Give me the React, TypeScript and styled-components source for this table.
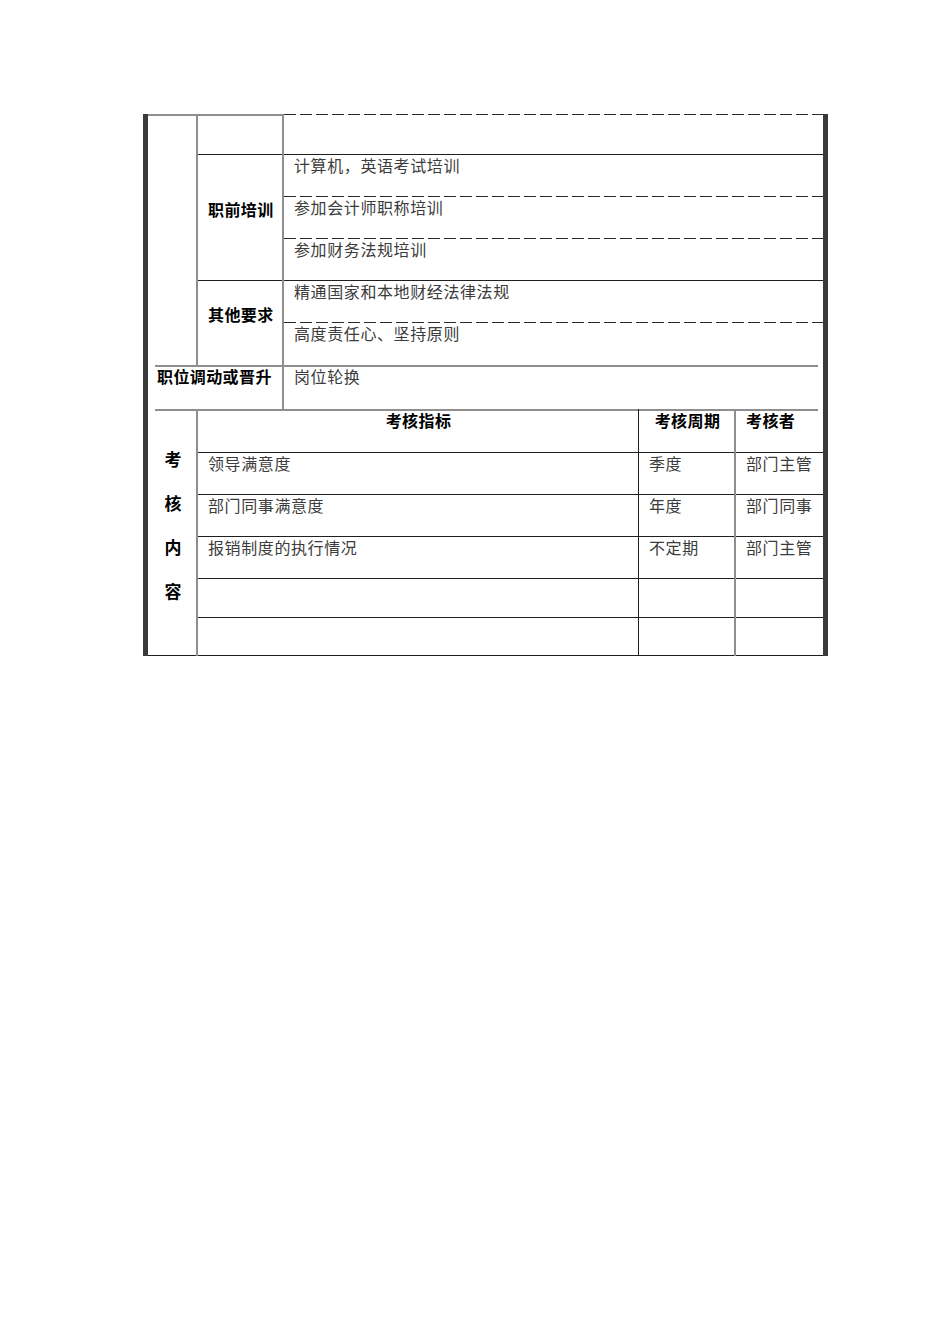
import React from "react";
import styled, { createGlobalStyle } from "styled-components";

type Line = "dark" | "grey" | "dash" | "none";
type Side = "dark" | "grey" | "none";

const DARK = "#1f1f1f";
const GREY = "#8e8e8e";

const GlobalStyle = createGlobalStyle`
    body {
        margin: 0;
        background: #fff;
    }
`;

const Page = styled.div`
    padding: 114px 0 0 143px;
    font-family: "Noto Sans CJK SC", "Noto Sans", sans-serif;
`;

const Frame = styled.div`
    width: 675px;
    border-left: 5px solid #3a3a3a;
    border-right: 5px solid #3a3a3a;
`;

const Sheet = styled.table`
    width: 675px;
    table-layout: fixed;
    border-collapse: separate;
    border-spacing: 0;
    box-shadow: inset 0 -1px 0 ${DARK};
`;

const Row = styled.tr<{ $h: number }>`
    height: ${(p) => p.$h}px;
`;

// top line drawn as a background so it does not change the row heights
const topLine = (kind: Line, gapStart: number, gapEnd: number) => {
    const pos = `${gapStart}px 0`;
    const w = `calc(100% - ${gapStart + gapEnd}px)`;
    switch (kind) {
        case "dark":
            return `linear-gradient(${DARK}, ${DARK}) ${pos} / ${w} 1px no-repeat`;
        case "grey":
            return `linear-gradient(${GREY}, ${GREY}) ${pos} / ${w} 2px no-repeat`;
        case "dash":
            return `repeating-linear-gradient(to right, #2b2b2b 0 12px, transparent 12px 16px) ${pos} / ${w} 1px no-repeat`;
        default:
            return "none";
    }
};

const rightLine = (kind: Side) => {
    switch (kind) {
        case "dark":
            return `inset -1px 0 0 ${DARK}`;
        case "grey":
            return `inset -2px 0 0 ${GREY}`;
        default:
            return "none";
    }
};

const Cell = styled.td<{
    $top?: Line;
    $right?: Side;
    $bold?: boolean;
    $center?: boolean;
    $middle?: boolean;
    $gapStart?: number;
    $gapEnd?: number;
    $lift?: number;
}>`
    padding: 1px 0 ${(p) => p.$lift ?? 0}px ${(p) => (p.$center ? 0 : 10)}px;
    vertical-align: ${(p) => (p.$middle ? "middle" : "top")};
    text-align: ${(p) => (p.$center ? "center" : "left")};
    font-size: 16px;
    line-height: 20px;
    letter-spacing: ${(p) => (p.$bold ? 0.4 : 0.6)}px;
    font-weight: ${(p) => (p.$bold ? 700 : 400)};
    color: ${(p) => (p.$bold ? "#000" : "#3c3c3c")};
    white-space: nowrap;
    background: ${(p) => topLine(p.$top ?? "none", p.$gapStart ?? 0, p.$gapEnd ?? 0)};
    box-shadow: ${(p) => rightLine(p.$right ?? "none")};
`;

const StackLabel = styled.div`
    display: flex;
    flex-direction: column;
    align-items: center;
    font-size: 17px;
    line-height: 44px;
    font-weight: 700;
    color: #000;
    letter-spacing: 0;
`;

const pretraining = ["计算机，英语考试培训", "参加会计师职称培训", "参加财务法规培训"];
const others = ["精通国家和本地财经法律法规", "高度责任心、坚持原则"];
const reviews = [
    { item: "领导满意度", cycle: "季度", by: "部门主管", h: 42 },
    { item: "部门同事满意度", cycle: "年度", by: "部门同事", h: 42 },
    { item: "报销制度的执行情况", cycle: "不定期", by: "部门主管", h: 42 },
    { item: "", cycle: "", by: "", h: 39 },
    { item: "", cycle: "", by: "", h: 39 },
];

export default function App() {
    return (
        <>
            <GlobalStyle />
            <Page>
                <Frame>
                    <Sheet>
                        <colgroup>
                            <col style={{ width: 50 }} />
                            <col style={{ width: 86 }} />
                            <col style={{ width: 355 }} />
                            <col style={{ width: 97 }} />
                            <col style={{ width: 87 }} />
                        </colgroup>
                        <tbody>
                            <Row $h={40}>
                                <Cell rowSpan={6} $top="grey" $right="grey" />
                                <Cell $top="grey" $right="grey" />
                                <Cell colSpan={3} $top="dash" />
                            </Row>
                            {pretraining.map((text, idx) => (
                                <Row key={text} $h={42}>
                                    {idx === 0 && (
                                        <Cell rowSpan={3} $top="dark" $right="grey" $bold $middle $lift={18}>
                                            职前培训
                                        </Cell>
                                    )}
                                    <Cell colSpan={3} $top={idx === 0 ? "dark" : "dash"}>
                                        {text}
                                    </Cell>
                                </Row>
                            ))}
                            {others.map((text, idx) => (
                                <Row key={text} $h={idx === 0 ? 42 : 43}>
                                    {idx === 0 && (
                                        <Cell rowSpan={2} $top="dark" $right="grey" $bold $middle $lift={18}>
                                            其他要求
                                        </Cell>
                                    )}
                                    <Cell colSpan={3} $top={idx === 0 ? "dark" : "dash"}>
                                        {text}
                                    </Cell>
                                </Row>
                            ))}
                            <Row $h={44}>
                                <Cell colSpan={2} $top="grey" $right="grey" $bold $gapStart={7}>
                                    <span style={{ marginLeft: -1 }}>职位调动或晋升</span>
                                </Cell>
                                <Cell colSpan={3} $top="grey" $gapEnd={5}>
                                    岗位轮换
                                </Cell>
                            </Row>
                            <Row $h={43}>
                                <Cell rowSpan={6} $top="grey" $right="grey" $middle $center $gapStart={7} $lift={16}>
                                    <StackLabel>
                                        {["考", "核", "内", "容"].map((ch) => (
                                            <span key={ch}>{ch}</span>
                                        ))}
                                    </StackLabel>
                                </Cell>
                                <Cell colSpan={2} $top="grey" $right="dark" $bold $center>
                                    考核指标
                                </Cell>
                                <Cell $top="grey" $right="grey" $bold $center>
                                    考核周期
                                </Cell>
                                <Cell $top="grey" $bold $gapEnd={5}>
                                    考核者
                                </Cell>
                            </Row>
                            {reviews.map((r, idx) => (
                                <Row key={idx} $h={r.h}>
                                    <Cell colSpan={2} $top="dark" $right="dark">
                                        {r.item}
                                    </Cell>
                                    <Cell $top="dark" $right="grey">
                                        {r.cycle}
                                    </Cell>
                                    <Cell $top="dark">{r.by}</Cell>
                                </Row>
                            ))}
                        </tbody>
                    </Sheet>
                </Frame>
            </Page>
        </>
    );
}
